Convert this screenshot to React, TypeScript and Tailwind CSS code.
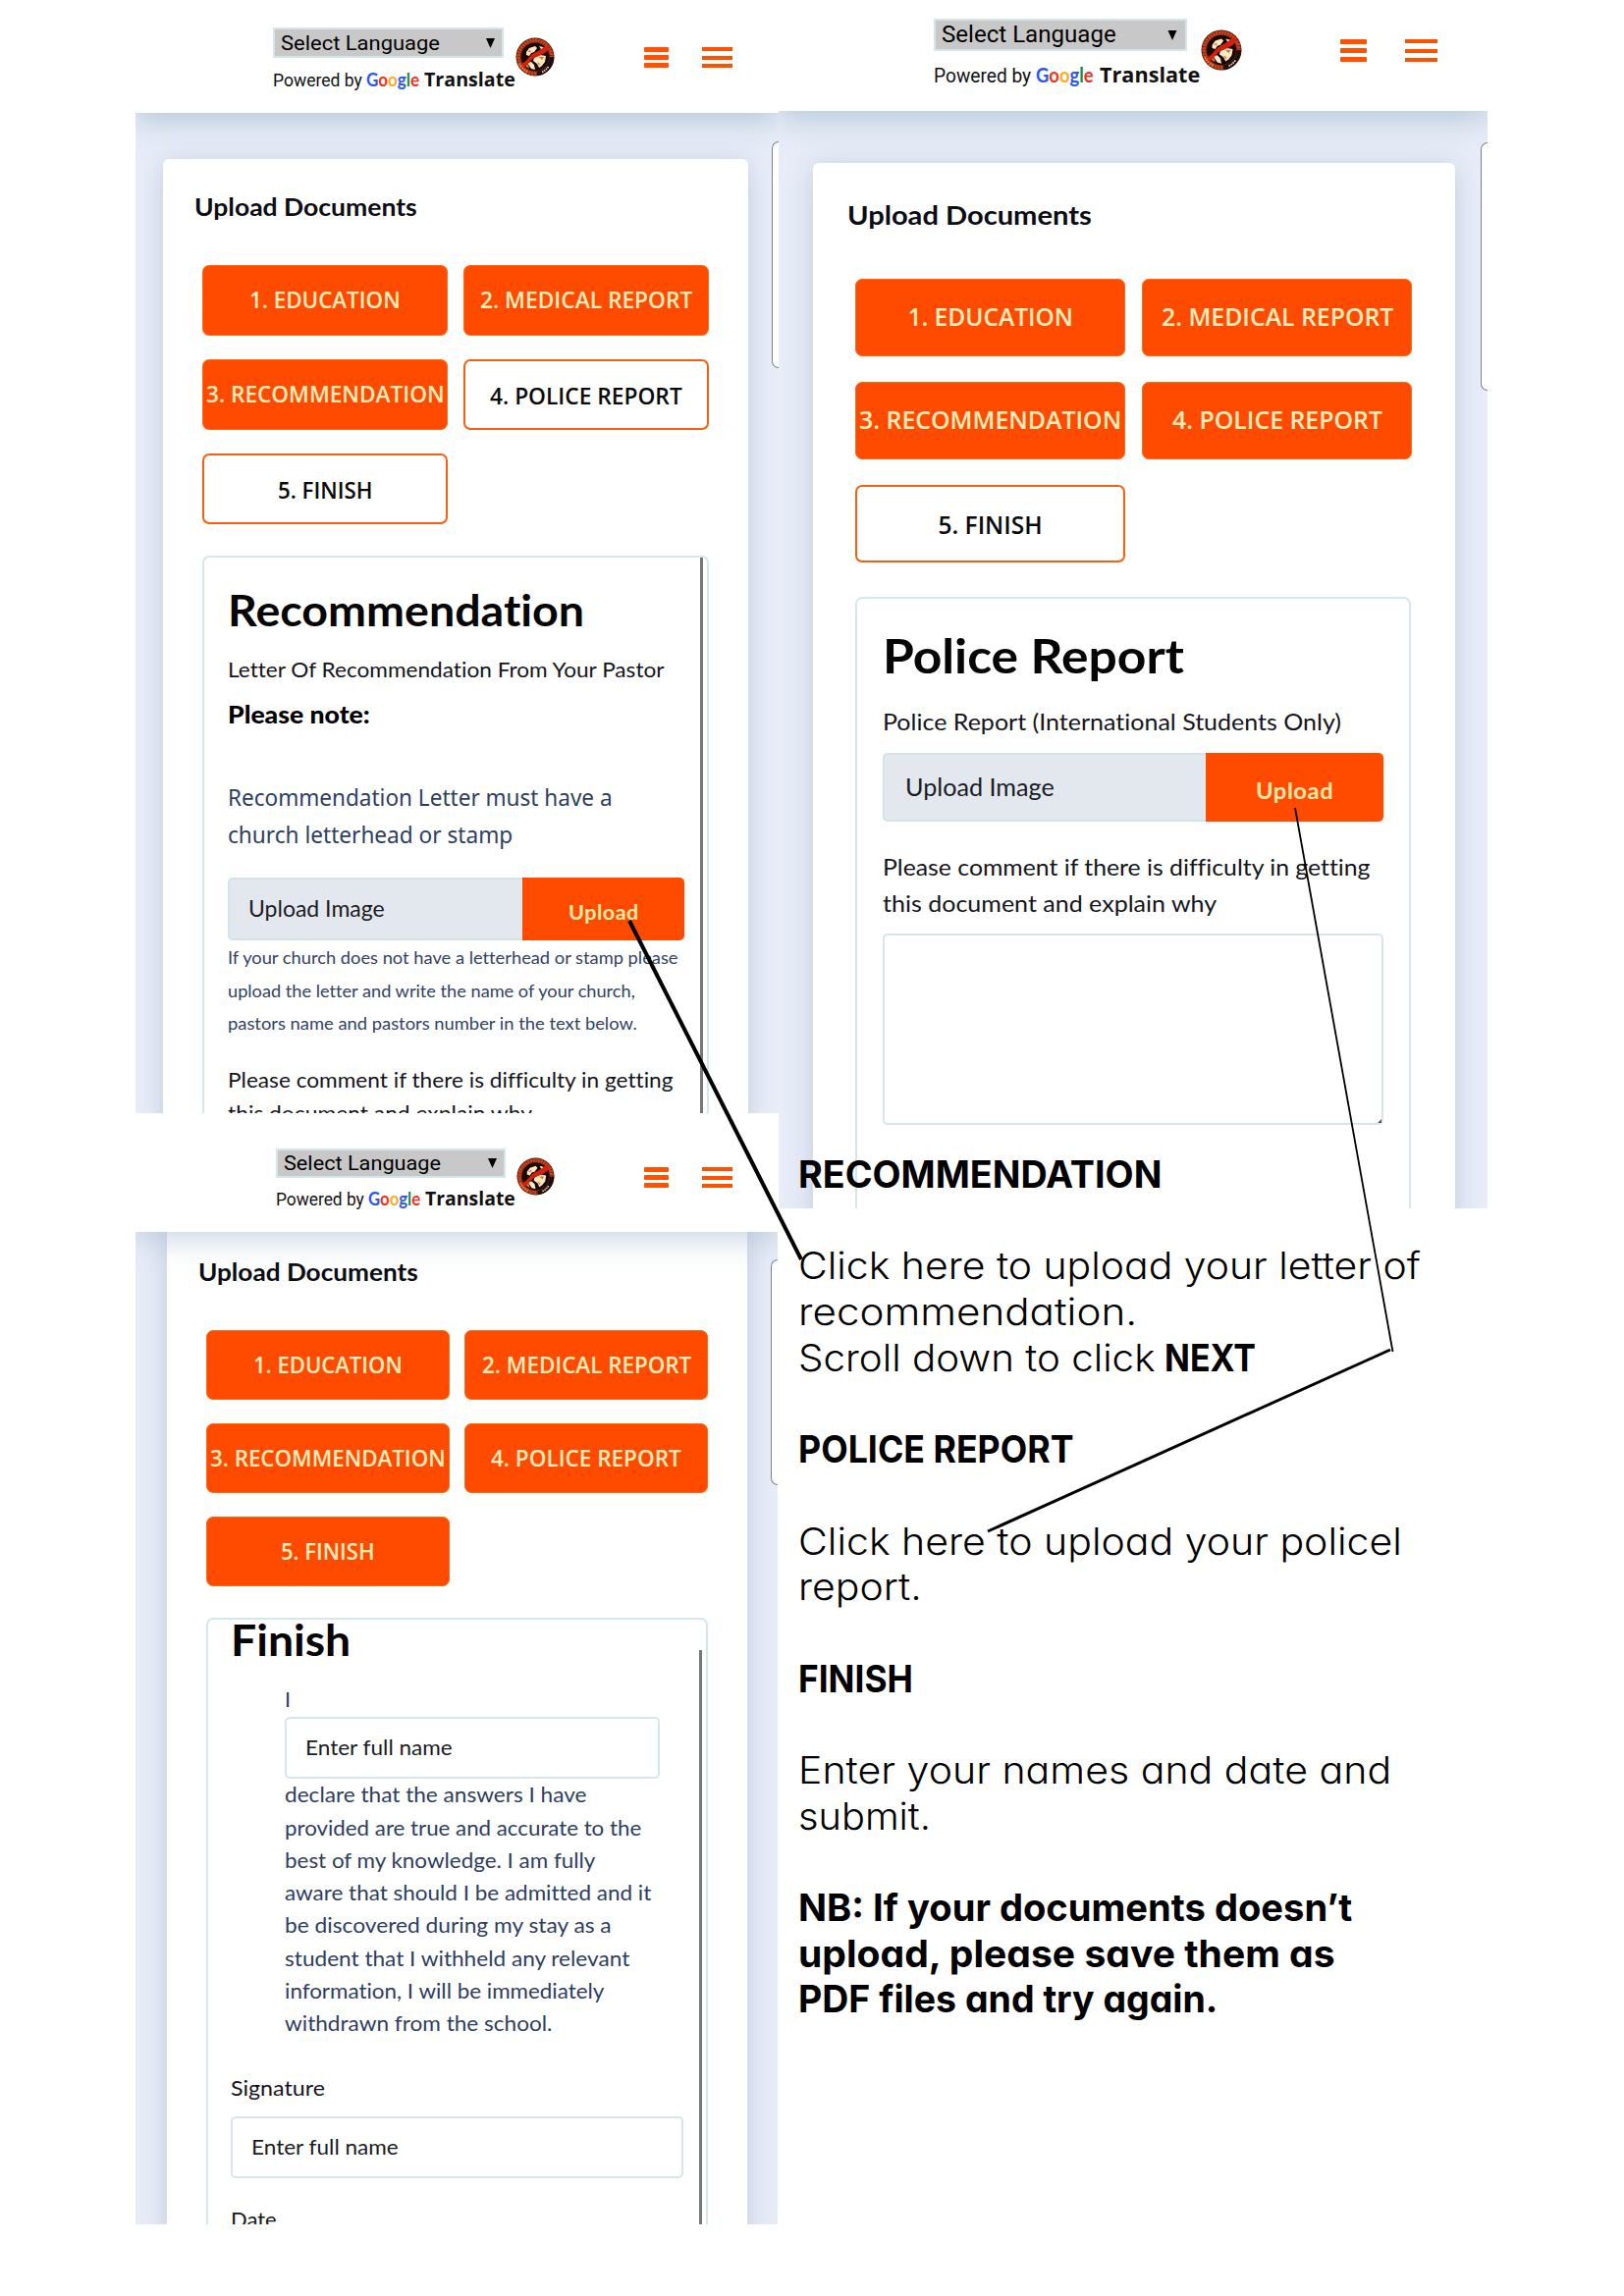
import { useLayoutEffect, useRef, useState } from "react";
import type { ReactNode } from "react";

/* A single line of text whose glyphs are stretched to fill the given width. */
function Fit({ w, className = "", children }: { w: number; className?: string; children: ReactNode }) {
  const ref = useRef<HTMLSpanElement>(null);
  const [ratio, setRatio] = useState(1);
  useLayoutEffect(() => {
    if (ref.current) setRatio(w / ref.current.offsetWidth);
  }, [w]);
  return (
    <span className={`inline-block whitespace-nowrap ${className}`} style={{ width: w }}>
      <span ref={ref} className="inline-block origin-left" style={{ transform: `scaleX(${ratio})` }}>
        {children}
      </span>
    </span>
  );
}

function Crest({ className }: { className: string }) {
  return (
    <svg viewBox="0 0 40 40" className={className}>
      <circle cx="20" cy="20" r="19.5" fill="#3a1208" />
      <circle cx="20" cy="20" r="16.800" fill="none" stroke="#c9421a" strokeWidth="4" strokeDasharray="2.400 0.400" />
      <path d="M4 27A17 17 0 0 0 12 35" fill="none" stroke="#f08a3a" strokeWidth="2" strokeDasharray="1.500 1" />
      <path d="M37 20A17 17 0 0 1 22 37" fill="none" stroke="#1f0f0b" strokeWidth="4.5" />
      <path d="M33.500 30A17 17 0 0 1 27 35.500" fill="none" stroke="#e9ddd0" strokeWidth="1.600" strokeDasharray="1.500 0.800" />
      <circle cx="20" cy="20" r="13.800" fill="#170806" />
      <path d="M11 15l3-4 6-2 2 2-3 4-3 1-2 3-3-1zM24 9l4 1 2 3-4-1zM19 21l6-3 6 1-1 6-3 4-3 2-2-4-4-3zM12 26l4-1 3 3 1 5-4-1z" fill="#fbe9c4" />
      <path d="M9 27l2 3 3 2-1-4zM24 20l3 3 2-3zM12 15l3-2 1 2zM22 25l3 2-1 2z" fill="#e8722c" />
      <path d="M6 27C12 25 13 19 19 16S28 11 32 7l3 4C31 16 27 18 21 20S14 28 8 31z" fill="#d3200f" />
    </svg>
  );
}

function GoogleWord({ w, className }: { w: number; className: string }) {
  return (
    <Fit w={w} className={className}>
      <span className="text-[#2a56f5]">G</span>
      <span className="text-[#f5301a]">o</span>
      <span className="text-[#fbae16]">o</span>
      <span className="text-[#2a56f5]">g</span>
      <span className="text-[#1c8a45]">l</span>
      <span className="text-[#f5301a]">e</span>
    </Fit>
  );
}

function Bars({ className, bar }: { className: string; bar: string }) {
  return (
    <div className={`flex flex-col justify-between ${className}`}>
      <i className={bar} />
      <i className={bar} />
      <i className={bar} />
    </div>
  );
}

function Step({ w, solid, className, children }: { w: number; solid: boolean; className: string; children: string }) {
  return (
    <div
      className={`flex items-center justify-center rounded-[7px] font-['Open_Sans',sans-serif] font-semibold ${
        solid ? "bg-[#ff4b00] text-[#ffedbd] border border-[#ff6a10]" : "border-2 border-[#f4600f] bg-white pt-[3px] text-[#0a0a0a]"
      } ${className}`}
    >
      <Fit w={w}>{children}</Fit>
    </div>
  );
}

/* Side tab that peeks in from the right edge of a screen. */
function EdgeTab({ className }: { className: string }) {
  return <div className={`absolute right-0 w-[7px] rounded-l-[7px] border border-r-0 border-[#7d8288] bg-white ${className}`} />;
}

function RecommendationScreen() {
  return (
    <section className="relative h-[1134px] w-[655px] overflow-hidden bg-[#e8edf8]">
      <header className="relative z-10 flex h-[115px] bg-white pl-[140px] shadow-[0_6px_30px_rgba(120,155,180,0.5)]">
        <div className="w-[248px] pt-[28px]">
          <div className="flex h-[31px] w-[235px] items-center justify-between border-2 border-[#d3e6e8] bg-[#c8c8c8] pr-[7px] pl-[6px] font-[Roboto,sans-serif] text-[21px] leading-[26px] text-black">
            <Fit w={162}>Select Language</Fit>
            <svg viewBox="0 0 9 10" className="h-[10px] w-[9px]"><path d="M0 0h9L4.500 10z" /></svg>
          </div>
          <div className="mt-[9px] flex items-baseline font-[Roboto,sans-serif] text-[18.500px] leading-[28px] text-[#111]">
            <Fit w={91}>Powered by</Fit>
            <GoogleWord w={54} className="ml-[4px] font-[Lato,sans-serif] text-[18px] leading-[20px] font-bold" />
            <Fit w={93} className="ml-[5px] font-['Open_Sans',sans-serif] text-[19px] leading-[20px] font-bold">Translate</Fit>
          </div>
        </div>
        <Crest className="mt-[38px] -ml-[1px] size-[40px]" />
        <Bars className="mt-[48px] ml-[91px] h-[21px] w-[25px]" bar="h-[5px] rounded-[1px] bg-[#ff5200]" />
        <Bars className="mt-[48px] ml-[34px] h-[21px] w-[31px]" bar="h-[4px] bg-[#ff5200]" />
      </header>
      <EdgeTab className="top-[144px] h-[231px]" />
      <div className="mt-[47px] ml-[28px] h-[1100px] w-[596px] rounded-[6px] bg-white px-[40px] shadow-[0_5px_26px_rgba(120,135,175,0.34)]">
        <h2 className="-ml-[8px] h-[108px] pt-[29px] font-[Lato,sans-serif] text-[25px] leading-[38px] font-bold text-[#0c0c14]">
          <Fit w={227}>Upload Documents</Fit>
        </h2>
        <div className="grid grid-cols-[250px_250px] gap-x-[16px] gap-y-[24px] text-[22.500px] leading-[32px]">
          <Step w={154} solid className="h-[72px]">1. EDUCATION</Step>
          <Step w={216} solid className="h-[72px]">2. MEDICAL REPORT</Step>
          <Step w={243} solid className="h-[72px]">3. RECOMMENDATION</Step>
          <Step w={196} solid={false} className="h-[72px]">4. POLICE REPORT</Step>
          <Step w={97} solid={false} className="h-[72px]">5. FINISH</Step>
        </div>
        <div className="relative mt-[32px] h-[700px] w-[516px] rounded-[7px] border-2 border-[#d5e7e9] pl-[24px] font-[Lato,sans-serif] [font-variant-ligatures:none]">
          <div className="absolute top-0 right-[4px] h-full w-[3px] bg-[#777]" />
          <h1 className="mt-[25px] h-[56px] text-[44px] leading-[56px] font-bold text-[#060606]"><Fit w={363}>Recommendation</Fit></h1>
          <p className="mt-[16px] text-[22px] leading-[34px] text-[#15151c]"><Fit w={444}>Letter Of Recommendation From Your Pastor</Fit></p>
          <p className="mt-[12px] text-[24px] leading-[34px] font-black text-black"><Fit w={145}>Please note:</Fit></p>
          <div className="mt-[48px] font-['Noto_Sans',sans-serif] text-[23px] leading-[38px] text-[#2e4062]">
            <p><Fit w={392}>Recommendation Letter must have a</Fit></p>
            <p><Fit w={290}>church letterhead or stamp</Fit></p>
          </div>
          <div className="mt-[25px] flex h-[64px] w-[465px]">
            <div className="w-[300px] rounded-l-[5px] border-2 border-r-0 border-[#d2e4e6] bg-[#e3e8ef] pl-[19px] text-[22.500px] leading-[59px] text-[#1a1c24]"><Fit w={139}>Upload Image</Fit></div>
            <div className="w-[165px] rounded-r-[5px] bg-[#ff4b00] pl-[47px] text-[20px] leading-[70px] font-bold tracking-[0.500px] text-[#ffe9a8]"><Fit w={72}>Upload</Fit></div>
          </div>
          <div className="mt-[1px] text-[18px] leading-[33.500px] text-[#324263]">
            <p><Fit w={458}>If your church does not have a letterhead or stamp please</Fit></p>
            <p><Fit w={415}>upload the letter and write the name of your church,</Fit></p>
            <p><Fit w={417}>pastors name and pastors number in the text below.</Fit></p>
          </div>
          <div className="mt-[23px] text-[22px] leading-[34px] text-[#15151c]">
            <p><Fit w={453}>Please comment if there is difficulty in getting</Fit></p>
            <p><Fit w={310}>this document and explain why</Fit></p>
          </div>
        </div>
      </div>
    </section>
  );
}

function FinishScreen() {
  return (
    <section className="relative h-[1132px] w-[654px] overflow-hidden bg-[#e8edf8]">
      <header className="relative z-10 flex h-[121px] bg-white pl-[143px] shadow-[0_6px_30px_rgba(120,150,180,0.42)]">
        <div className="w-[246px] pt-[36px]">
          <div className="flex h-[30px] w-[234px] items-center justify-between border-2 border-[#d3e6e8] bg-[#c8c8c8] pr-[7px] pl-[6px] font-[Roboto,sans-serif] text-[21px] leading-[26px] text-black">
            <Fit w={160}>Select Language</Fit>
            <svg viewBox="0 0 9 10" className="h-[10px] w-[9px]"><path d="M0 0h9L4.500 10z" /></svg>
          </div>
          <div className="mt-[8px] flex items-baseline font-[Roboto,sans-serif] text-[18.500px] leading-[28px] text-[#111]">
            <Fit w={90}>Powered by</Fit>
            <GoogleWord w={53} className="ml-[4px] font-[Lato,sans-serif] text-[18px] leading-[20px] font-bold" />
            <Fit w={92} className="ml-[5px] font-['Open_Sans',sans-serif] text-[19px] leading-[20px] font-bold">Translate</Fit>
          </div>
        </div>
        <Crest className="mt-[45px] -ml-[1px] size-[39px]" />
        <Bars className="mt-[55px] ml-[91px] h-[21px] w-[25px]" bar="h-[5px] rounded-[1px] bg-[#ff5200]" />
        <Bars className="mt-[55px] ml-[34px] h-[21px] w-[31px]" bar="h-[4px] bg-[#ff5200]" />
      </header>
      <EdgeTab className="top-[149px] h-[230px]" />
      <div className="-mt-[4px] ml-[32px] h-[1060px] w-[591px] bg-white px-[40px] shadow-[0_5px_26px_rgba(120,135,175,0.34)]">
        <h2 className="-ml-[8px] h-[104px] pt-[25px] font-[Lato,sans-serif] text-[25px] leading-[38px] font-bold text-[#0c0c14]">
          <Fit w={224}>Upload Documents</Fit>
        </h2>
        <div className="grid grid-cols-[248px_248px] gap-x-[15px] gap-y-[24px] text-[22.500px] leading-[32px]">
          <Step w={152} solid className="h-[71px]">1. EDUCATION</Step>
          <Step w={213} solid className="h-[71px]">2. MEDICAL REPORT</Step>
          <Step w={240} solid className="h-[71px]">3. RECOMMENDATION</Step>
          <Step w={194} solid className="h-[71px]">4. POLICE REPORT</Step>
          <Step w={96} solid className="h-[71px]">5. FINISH</Step>
        </div>
        <div className="relative mt-[32px] h-[700px] w-[511px] rounded-[7px] border-2 border-[#d5e7e9] pl-[23px] font-[Lato,sans-serif] [font-variant-ligatures:none]">
          <div className="absolute top-[31px] right-[4px] h-full w-[3px] bg-[#777]" />
          <h1 className="-mt-[8px] h-[56px] text-[44px] leading-[56px] font-bold text-[#060606]"><Fit w={122}>Finish</Fit></h1>
          <div className="mt-[17px] ml-[55px] text-[21.500px] leading-[33.300px] text-[#2e3e60]">
            <p>I</p>
            <div className="mt-[1px] h-[63px] w-[382px] rounded-[5px] border-2 border-[#d5e7e9] bg-white pl-[19px] leading-[58px] text-[#1a1c24]"><Fit w={150}>Enter full name</Fit></div>
            <p><Fit w={307}>declare that the answers I have</Fit></p>
            <p><Fit w={363}>provided are true and accurate to the</Fit></p>
            <p><Fit w={316}>best of my knowledge. I am fully</Fit></p>
            <p><Fit w={373}>aware that should I be admitted and it</Fit></p>
            <p><Fit w={333}>be discovered during my stay as a</Fit></p>
            <p><Fit w={351}>student that I withheld any relevant</Fit></p>
            <p><Fit w={325}>information, I will be immediately</Fit></p>
            <p><Fit w={272}>withdrawn from the school.</Fit></p>
          </div>
          <p className="mt-[31px] text-[22px] leading-[34px] text-[#15151c]"><Fit w={96}>Signature</Fit></p>
          <div className="mt-[12px] h-[63px] w-[461px] rounded-[5px] border-2 border-[#d5e7e9] bg-white pl-[19px] text-[21.500px] leading-[58px] text-[#1a1c24]"><Fit w={150}>Enter full name</Fit></div>
          <p className="mt-[25px] text-[22px] leading-[34px] text-[#15151c]"><Fit w={47}>Date</Fit></p>
        </div>
      </div>
    </section>
  );
}

function PoliceScreen() {
  return (
    <section className="relative h-[1231px] w-[722px] overflow-hidden bg-[#e8edf8]">
      <header className="relative z-10 flex h-[113px] bg-white pl-[158px] shadow-[0_6px_32px_rgba(120,155,180,0.5)]">
        <div className="w-[272px] pt-[19px]">
          <div className="flex h-[33px] w-[258px] items-center justify-between border-2 border-[#d3e6e8] bg-[#c8c8c8] pr-[8px] pl-[6px] font-[Roboto,sans-serif] text-[23px] leading-[29px] text-black">
            <Fit w={178}>Select Language</Fit>
            <svg viewBox="0 0 9 10" className="h-[10px] w-[10px]"><path d="M0 0h9L4.500 10z" /></svg>
          </div>
          <div className="mt-[10px] flex items-baseline font-[Roboto,sans-serif] text-[20.500px] leading-[30px] text-[#111]">
            <Fit w={99}>Powered by</Fit>
            <GoogleWord w={59} className="ml-[5px] font-[Lato,sans-serif] text-[20px] leading-[20px] font-bold" />
            <Fit w={102} className="ml-[6px] font-['Open_Sans',sans-serif] text-[21px] leading-[20px] font-bold">Translate</Fit>
          </div>
        </div>
        <Crest className="mt-[30px] size-[42px]" />
        <Bars className="mt-[40px] ml-[100px] h-[23px] w-[27px]" bar="h-[5px] rounded-[1px] bg-[#ff5200]" />
        <Bars className="mt-[40px] ml-[39px] h-[23px] w-[33px]" bar="h-[4px] bg-[#ff5200]" />
      </header>
      <EdgeTab className="top-[145px] h-[253px]" />
      <div className="mt-[53px] ml-[35px] h-[1100px] w-[654px] rounded-[6px] bg-white px-[43px] shadow-[0_5px_28px_rgba(120,135,175,0.34)]">
        <h2 className="-ml-[8px] h-[118px] pt-[34px] font-[Lato,sans-serif] text-[27px] leading-[38px] font-bold text-[#0c0c14]">
          <Fit w={249}>Upload Documents</Fit>
        </h2>
        <div className="grid grid-cols-[275px_275px] gap-x-[17px] gap-y-[26px] text-[24.500px]">
          <Step w={168} solid className="h-[79px]">1. EDUCATION</Step>
          <Step w={236} solid className="h-[79px]">2. MEDICAL REPORT</Step>
          <Step w={267} solid className="h-[79px]">3. RECOMMENDATION</Step>
          <Step w={214} solid className="h-[79px]">4. POLICE REPORT</Step>
          <Step w={106} solid={false} className="h-[79px]">5. FINISH</Step>
        </div>
        <div className="mt-[35px] h-[700px] w-[566px] rounded-[7px] border-2 border-[#d5e7e9] pl-[26px] font-[Lato,sans-serif] [font-variant-ligatures:none]">
          <h1 className="mt-[29px] h-[58px] text-[47px] leading-[58px] font-bold text-[#060606]"><Fit w={307}>Police Report</Fit></h1>
          <p className="mt-[21px] text-[24px] leading-[34px] text-[#15151c]"><Fit w={467}>Police Report (International Students Only)</Fit></p>
          <div className="mt-[15px] flex h-[70px] w-[510px]">
            <div className="w-[329px] rounded-l-[5px] border-2 border-r-0 border-[#d2e4e6] bg-[#e3e8ef] pl-[21px] text-[24.500px] leading-[65px] text-[#1a1c24]"><Fit w={152}>Upload Image</Fit></div>
            <div className="w-[181px] rounded-r-[5px] bg-[#ff4b00] pl-[51px] text-[22px] leading-[77px] font-bold tracking-[0.500px] text-[#ffe9a8]"><Fit w={79}>Upload</Fit></div>
          </div>
          <div className="mt-[27px] text-[24px] leading-[37px] text-[#15151c]">
            <p><Fit w={497}>Please comment if there is difficulty in getting</Fit></p>
            <p><Fit w={340}>this document and explain why</Fit></p>
          </div>
          <div className="relative mt-[13px] h-[195px] w-[510px] rounded-[5px] border-2 border-[#d5e7e9] bg-white">
            <svg viewBox="0 0 4 4" className="absolute right-0 bottom-0 size-[4px]"><path d="M4 0V4H0z" fill="#555" /></svg>
          </div>
        </div>
      </div>
    </section>
  );
}

function Instructions() {
  return (
    <article className="relative z-20 -mt-[58px] ml-[20px] font-[Inter,sans-serif] text-[38px] leading-[46.680px] font-light text-black [font-feature-settings:'cv11']">
      <p className="font-bold"><Fit w={370}>RECOMMENDATION</Fit></p>
      <br />
      <p><Fit w={634}>Click here to upload your letter of</Fit></p>
      <p><Fit w={345}>recommendation.</Fit></p>
      <p>
        <Fit w={364}>Scroll down to click</Fit>
        <Fit w={93} className="ml-[9px] font-bold">NEXT</Fit>
      </p>
      <br />
      <p className="font-bold"><Fit w={281}>POLICE REPORT</Fit></p>
      <br />
      <p><Fit w={615}>Click here to upload your policel</Fit></p>
      <p><Fit w={126}>report.</Fit></p>
      <br />
      <p className="font-bold"><Fit w={117}>FINISH</Fit></p>
      <br />
      <p><Fit w={604}>Enter your names and date and</Fit></p>
      <p><Fit w={135}>submit.</Fit></p>
      <br />
      <div className="font-bold">
        <p><Fit w={564}>NB: If your documents doesn’t</Fit></p>
        <p><Fit w={547}>upload, please save them as</Fit></p>
        <p><Fit w={427}>PDF files and try again.</Fit></p>
      </div>
    </article>
  );
}

export default function App() {
  return (
    <main className="relative flex h-[2339px] w-[1654px] overflow-hidden bg-white pl-[138px]">
      <div className="w-[655px]">
        <RecommendationScreen />
        <FinishScreen />
      </div>
      <div className="w-[722px]">
        <PoliceScreen />
        <Instructions />
      </div>
      <svg viewBox="0 0 1654 2339" className="pointer-events-none absolute inset-0 z-30 h-[2339px] w-[1654px]" stroke="#000" fill="none">
        <path d="M641 938L816 1283" strokeWidth="4" />
        <path d="M1319 823L1418.500 1377" strokeWidth="1.800" />
        <path d="M1416 1375L1006 1560" strokeWidth="3" />
      </svg>
    </main>
  );
}
